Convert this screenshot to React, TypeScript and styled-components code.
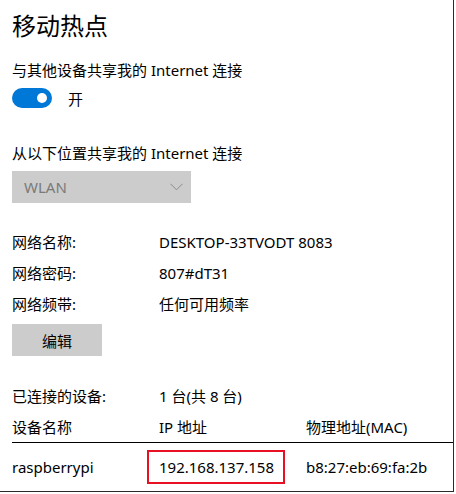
import styled, { createGlobalStyle } from "styled-components";

const GlobalStyle = createGlobalStyle`
    body {
        margin: 0;
        background: #ffffff;
        font-family: "Noto Sans", "Noto Sans CJK SC", sans-serif;
        color: #000000;
    }
`;

const devices = [
    { name: "raspberrypi", ip: "192.168.137.158", mac: "b8:27:eb:69:fa:2b" },
];

const info = [
    { label: "网络名称:", value: "DESKTOP-33TVODT 8083" },
    { label: "网络密码:", value: "807#dT31" },
    { label: "网络频带:", value: "任何可用频率" },
];

export default function App() {
    return (
        <>
            <GlobalStyle />
            <Window>
                <Title>移动热点</Title>
                <Label $top={18}>与其他设备共享我的 Internet 连接</Label>
                <ToggleRow>
                    <Toggle $on>
                        <Knob />
                    </Toggle>
                    <span>开</span>
                </ToggleRow>
                <Label $top={35}>从以下位置共享我的 Internet 连接</Label>
                <Select>
                    <span>WLAN</span>
                    <svg width="13" height="8" viewBox="0 0 13 8">
                        <path d="M0.5 0.8 L6.5 6.8 L12.5 0.8" fill="none" stroke="#8a8a8a" strokeWidth="1" />
                    </svg>
                </Select>
                <InfoList>
                    {info.map((item) => (
                        <InfoRow key={item.label}>
                            <span>{item.label}</span>
                            <span>{item.value}</span>
                        </InfoRow>
                    ))}
                </InfoList>
                <Button>编辑</Button>
                <InfoRow $top={24}>
                    <span>已连接的设备:</span>
                    <span>1 台(共 8 台)</span>
                </InfoRow>
                <TableHead>
                    <span>设备名称</span>
                    <span>IP 地址</span>
                    <span>物理地址(MAC)</span>
                </TableHead>
                {devices.map((d) => (
                    <TableRow key={d.mac}>
                        <span>{d.name}</span>
                        <span>
                            <Highlight>{d.ip}</Highlight>
                        </span>
                        <span>{d.mac}</span>
                    </TableRow>
                ))}
            </Window>
        </>
    );
}

const Window = styled.div`
    width: 441px;
    height: 481px;
    padding: 10px 0 0 12px;
    border-right: 1px solid #2b2b2b;
    border-bottom: 1px solid #2b2b2b;
    display: flex;
    flex-direction: column;
    align-items: flex-start;
    font-size: 15px;
`;

const Title = styled.h1`
    margin: 0;
    font-size: 24px;
    font-weight: 400;
    line-height: 32px;
`;

const Label = styled.div<{ $top: number }>`
    margin-top: ${(p) => p.$top}px;
    line-height: 20px;
`;

const ToggleRow = styled.div`
    margin-top: 8px;
    display: flex;
    align-items: center;
    gap: 16px;
    height: 20px;
`;

const Toggle = styled.div<{ $on?: boolean }>`
    width: 40px;
    height: 20px;
    border-radius: 10px;
    background: ${(p) => (p.$on ? "#0078d7" : "#ffffff")};
    display: flex;
    align-items: center;
    justify-content: ${(p) => (p.$on ? "flex-end" : "flex-start")};
    padding: 0 5px;
    box-sizing: border-box;
`;

const Knob = styled.div`
    width: 10px;
    height: 10px;
    border-radius: 50%;
    background: #ffffff;
`;

const Select = styled.div`
    margin-top: 8px;
    width: 179px;
    height: 32px;
    background: #cccccc;
    color: #7a7a7a;
    display: flex;
    align-items: center;
    justify-content: space-between;
    padding: 0 8px 0 12px;
    box-sizing: border-box;
`;

const InfoList = styled.div`
    margin-top: 23px;
    display: flex;
    flex-direction: column;
    align-self: stretch;
`;

const InfoRow = styled.div<{ $top?: number }>`
    margin-top: ${(p) => p.$top ?? 0}px;
    display: grid;
    grid-template-columns: 147px 1fr;
    align-items: center;
    height: 31px;
    align-self: stretch;
`;

const Button = styled.div`
    margin-top: 5px;
    width: 90px;
    height: 32px;
    background: #cccccc;
    display: flex;
    align-items: center;
    justify-content: center;
`;

const TableHead = styled.div`
    align-self: stretch;
    display: grid;
    grid-template-columns: 147px 147px 1fr;
    align-items: center;
    height: 31px;
    border-bottom: 1px solid #000000;
`;

const TableRow = styled.div`
    align-self: stretch;
    display: grid;
    grid-template-columns: 147px 147px 1fr;
    align-items: center;
    height: 47px;
`;

const Highlight = styled.span`
    display: inline-block;
    margin-left: -12px;
    padding: 5px 9px 5px 10px;
    border: 2px solid #e81123;
    line-height: 20px;
`;
